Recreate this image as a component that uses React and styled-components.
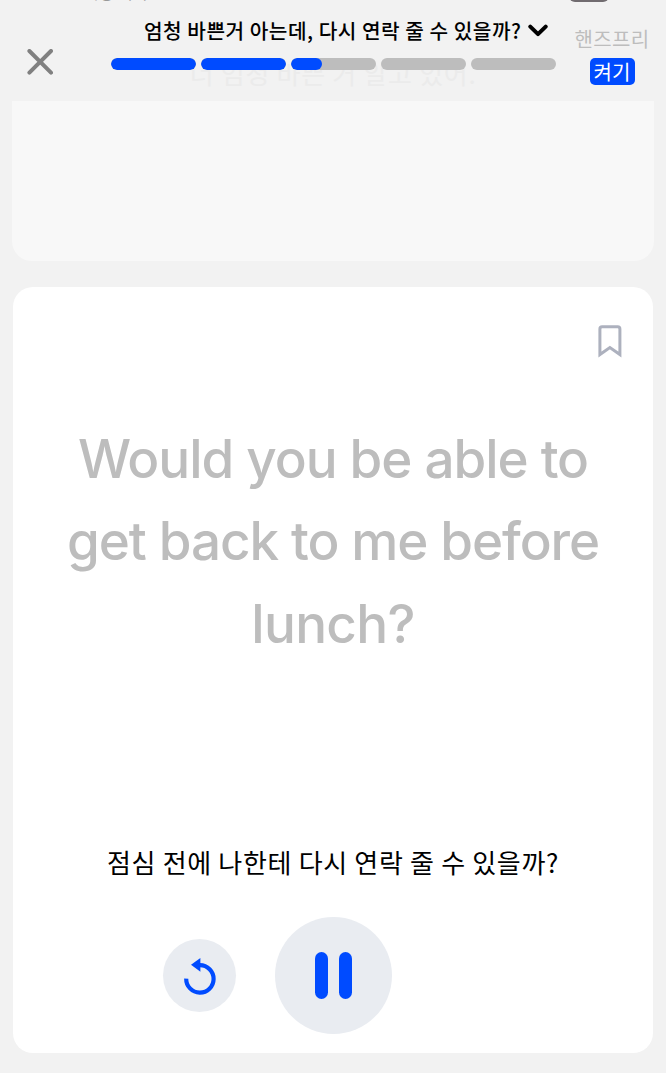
import React, { useState } from "react"
import styled, { createGlobalStyle } from "styled-components"

const segments = [100, 100, 37, 0, 0]
const sentence = [
  { text: "Would you be able to", spacing: -1.05 },
  { text: "get back to me before", spacing: -1.1 },
  { text: "lunch?", spacing: -0.7 }
]

export default function App() {
  const [playing, setPlaying] = useState(true)

  return (
    <Screen>
      <GlobalStyle />
      <Header>
        <StatusBar>
          <Carrier>시청 커리</Carrier>
          <Network>00000 ?</Network>
          <Battery />
        </StatusBar>
        <HeaderRow>
          <CloseButton aria-label="닫기">
            <svg width="26" height="26" viewBox="0 0 26 26" fill="none">
              <path d="M2.4 2L24 23.6M24 2L2.4 23.6" stroke="#808080" strokeWidth="4" strokeLinecap="round" />
            </svg>
          </CloseButton>
          <Center>
            <Title>
              <span>엄청 바쁜거 아는데, 다시 연락 줄 수 있을까?</span>
              <svg width="20" height="13" viewBox="0 0 20 13" fill="none">
                <path d="M2.3 2.6L10 10.1L17.7 2.6" stroke="#000" strokeWidth="4" strokeLinecap="round" strokeLinejoin="round" />
              </svg>
            </Title>
            <Progress>
              {segments.map((value, i) => (
                <Segment key={i}>
                  <Fill style={{ width: `${value}%` }} />
                </Segment>
              ))}
            </Progress>
          </Center>
          <HandsFree>
            <span>핸즈프리</span>
            <Toggle>켜기</Toggle>
          </HandsFree>
        </HeaderRow>
        <Ghost>너 엄청 바쁜 거 알고 있어.</Ghost>
      </Header>

      <PreviousCard />

      <Card>
        <Bookmark aria-label="북마크">
          <svg width="24" height="33" viewBox="0 0 24 33" fill="none">
            <path d="M1.9 29.6V4Q1.9 1.8 4.1 1.8H19.7Q21.9 1.8 21.9 4V29.6L11.9 22.6Z" stroke="#adb1be" strokeWidth="3" />
          </svg>
        </Bookmark>
        <Sentence>
          {sentence.map((line) => (
            <Line key={line.text} $spacing={line.spacing}>{line.text}</Line>
          ))}
        </Sentence>
        <Translation>점심 전에 나한테 다시 연락 줄 수 있을까?</Translation>
        <Controls>
          <RoundButton $size={73} aria-label="다시 듣기">
            <svg width="34" height="38" viewBox="0 0 34 38" fill="none">
              <path d="M3.2 21.6A13.7 13.7 0 1 0 16.9 8.2" stroke="#004bff" strokeWidth="4.2" />
              <path d="M8 7.8L17.4 1V14.8Z" fill="#004bff" />
            </svg>
          </RoundButton>
          <RoundButton $size={117} onClick={() => setPlaying(!playing)} aria-label="일시정지">
            <PauseBar />
            <PauseBar />
          </RoundButton>
        </Controls>
      </Card>
    </Screen>
  )
}

const GlobalStyle = createGlobalStyle`
  * {
    box-sizing: border-box;
  }
  body {
    margin: 0;
    background: #f2f2f2;
    font-family: Inter, "Noto Sans CJK KR", sans-serif;
  }
  button {
    border: 0;
    padding: 0;
    background: none;
    font: inherit;
    cursor: pointer;
  }
  svg {
    display: block;
  }
`

const Screen = styled.main`
  display: flex;
  flex-direction: column;
  width: 666px;
  height: 1073px;
  overflow: hidden;
  background: #f2f2f2;
`

const Header = styled.header`
  position: relative;
  height: 101px;
  flex: none;
`

const StatusBar = styled.div`
  display: flex;
  align-items: flex-end;
  height: 2px;
  padding-left: 84px;
  overflow: hidden;
  color: #999;
  font-size: 16px;
  line-height: 18px;
`

const Carrier = styled.span`
  width: 394px;
`

const Network = styled.span`
  width: 91px;
`

const Battery = styled.i`
  width: 40px;
  height: 18px;
  border-radius: 6px;
  background: #716c70;
`

const HeaderRow = styled.div`
  display: flex;
  position: relative;
  z-index: 1;
`

const CloseButton = styled.button`
  width: 26px;
  height: 26px;
  margin: 47px 0 0 27px;
`

const Center = styled.div`
  width: 445px;
  margin-left: 58px;
  padding-top: 13px;
`

const Title = styled.div`
  display: flex;
  align-items: center;
  gap: 6px;
  height: 30px;
  margin-left: 33px;
  color: #000;
  font-family: "Noto Sans CJK KR", sans-serif;
  font-size: 20.2px;
  font-weight: 500;
  letter-spacing: 0.54px;
  white-space: nowrap;
`

const Progress = styled.div`
  display: flex;
  gap: 5px;
  margin-top: 13px;
`

const Segment = styled.div`
  flex: 1;
  height: 12px;
  border-radius: 6px;
  overflow: hidden;
  background: #bdbdbd;
`

const Fill = styled.div`
  height: 100%;
  border-radius: 6px;
  background: #004bff;
`

const HandsFree = styled.div`
  display: flex;
  flex-direction: column;
  align-items: center;
  width: 76px;
  margin-left: 18px;
  padding-top: 22px;
  color: #bdbdbd;
  font-family: "Noto Sans CJK KR", sans-serif;
  font-size: 20px;
  letter-spacing: 0.3px;
  line-height: 30px;
  white-space: nowrap;
`

const Toggle = styled.button`
  width: 45px;
  height: 27px;
  margin-top: 4px;
  border-radius: 5px;
  background: #004bff;
  color: #fff;
  font-size: 20px;
  line-height: 26px;
`

const Ghost = styled.div`
  position: absolute;
  top: 55px;
  left: 0;
  width: 666px;
  text-align: center;
  color: #ebebeb;
  font-family: "Noto Sans CJK KR", sans-serif;
  font-size: 26px;
  letter-spacing: 0.7px;
  line-height: 36px;
`

const PreviousCard = styled.section`
  height: 160px;
  flex: none;
  margin: 0 12px;
  border-radius: 0 0 20px 20px;
  background: #f8f8f8;
`

const Card = styled.section`
  display: flex;
  flex-direction: column;
  align-items: center;
  height: 766px;
  flex: none;
  margin: 26px 13px 0 13px;
  border-radius: 20px;
  background: #fff;
`

const Bookmark = styled.button`
  align-self: flex-end;
  height: 33px;
  margin: 38px 31px 0 0;
`

const Sentence = styled.div`
  margin-top: 60px;
  color: #bdbdbd;
  font-family: Inter, sans-serif;
  font-size: 53px;
  font-weight: 500;
  line-height: 82.4px;
  text-align: center;
  white-space: nowrap;
`

const Line = styled.div`
  letter-spacing: ${(props) => props.$spacing}px;
`

const Translation = styled.div`
  margin-top: 178px;
  color: #000;
  font-family: "Noto Sans CJK KR", sans-serif;
  font-size: 26px;
  letter-spacing: 0.68px;
  line-height: 38px;
`

const Controls = styled.div`
  display: flex;
  align-items: center;
  align-self: flex-start;
  gap: 39px;
  margin: 36px 0 0 150px;
`

const RoundButton = styled.button`
  display: flex;
  align-items: center;
  justify-content: center;
  gap: 11px;
  width: ${(props) => props.$size}px;
  height: ${(props) => props.$size}px;
  border-radius: 50%;
  background: #e9ecf1;
`

const PauseBar = styled.i`
  width: 13px;
  height: 47px;
  border-radius: 7px;
  background: #004bff;
`
